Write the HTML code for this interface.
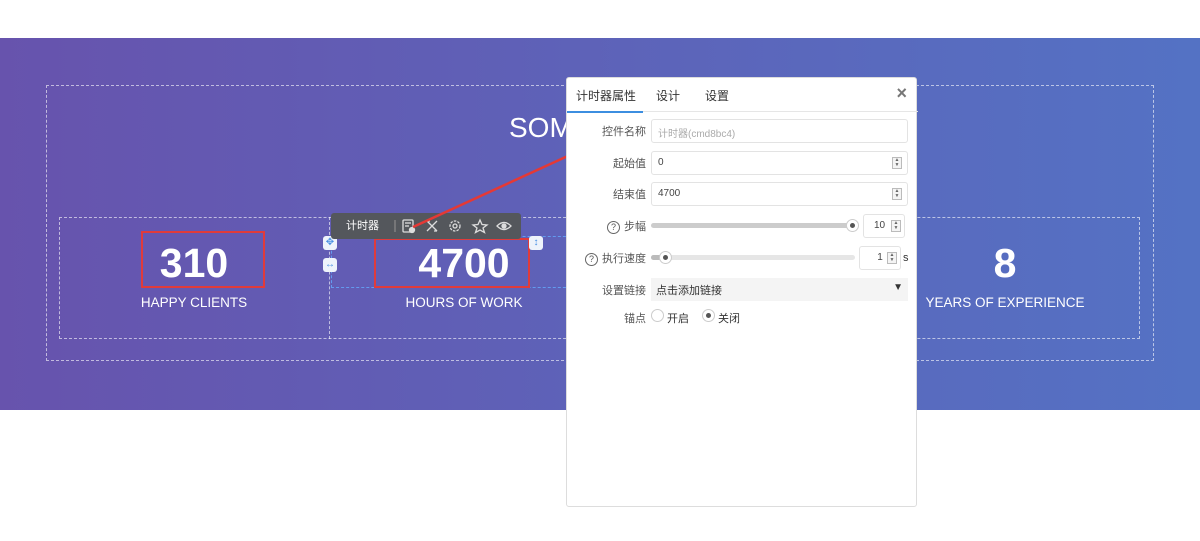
<!DOCTYPE html>
<html><head><meta charset="utf-8"><style>
*{box-sizing:border-box;margin:0;padding:0}
body{width:1200px;height:541px;background:#fff;position:relative;overflow:hidden;font-family:"Liberation Sans","Noto Sans CJK SC",sans-serif}
.band{position:absolute;left:0;top:38px;width:1200px;height:372px;background:linear-gradient(90deg,#6753ad,#5472c4)}
.dash{position:absolute;border:1px dashed rgba(255,255,255,.6)}
.num{position:absolute;color:#fff;font-weight:bold;font-size:41px;text-align:center}
.lab{position:absolute;color:#fff;font-size:13.5px;text-align:center}
.red{position:absolute;border:2px solid #e03b3b}
.panel{position:absolute;left:566px;top:77px;width:351px;height:430px;background:#fff;border:1px solid #ddd;border-radius:3px;font-size:11px;color:#333}
.row{position:absolute;left:0;width:351px;height:24px}
.row .l{position:absolute;right:272px;top:4px;color:#555;white-space:nowrap}
.inp{position:absolute;left:84px;height:24px;border:1px solid #e3e3e3;border-radius:3px;padding:5px 6px;color:#444;font-size:10px}
.spin{position:absolute;right:5px;top:5px;width:10px;height:12px;border:1px solid #bbb;background:#f4f4f4;font-size:5px;line-height:5px;text-align:center;color:#666}
.q{display:inline-block;width:13px;height:13px;border:1px solid #666;border-radius:50%;font-size:9px;text-align:center;line-height:11px;margin-right:4px}
.btn{position:absolute;width:14px;height:14px;background:#eef3fb;border-radius:3px;color:#4a90e2;font-size:10px;text-align:center;line-height:14px}
</style></head><body>
<div class="band"></div>
<div class="dash" style="left:46px;top:85px;width:1108px;height:276px"></div>
<div class="dash" style="left:59px;top:217px;width:1081px;height:122px"></div>
<div class="dash" style="left:329px;top:217px;width:0;height:122px;border-width:0 0 0 1px"></div>
<div class="dash" style="left:331px;top:236px;width:250px;height:52px;border-color:rgba(100,170,255,.8)"></div>
<div style="position:absolute;left:509px;top:112px;color:#fff;font-size:28px">SOM</div>
<div class="num" style="left:134px;top:240px;width:120px">310</div>
<div class="lab" style="left:114px;top:295px;width:160px">HAPPY CLIENTS</div>
<div class="red" style="left:141px;top:231px;width:124px;height:57px"></div>
<div class="num" style="left:404px;top:240px;width:120px">4700</div>
<div class="lab" style="left:384px;top:295px;width:160px">HOURS OF WORK</div>
<div class="red" style="left:374px;top:238px;width:156px;height:50px"></div>
<div class="num" style="left:945px;top:240px;width:120px">8</div>
<div class="lab" style="left:905px;top:295px;width:200px">YEARS OF EXPERIENCE</div>
<div class="btn" style="left:323px;top:236px">✥</div>
<div class="btn" style="left:323px;top:258px">↔</div>
<div class="btn" style="left:529px;top:236px">↕</div>
<div style="position:absolute;left:331px;top:213px;width:190px;height:26px;background:#54575c;border-radius:3px;color:#fff;font-size:11px;line-height:26px;padding-left:15px">计时器</div>
<svg style="position:absolute;left:331px;top:213px" width="190" height="26" fill="none" stroke="#ddd" stroke-width="1.3">
<line x1="64" y1="7" x2="64" y2="19" stroke="#888"/>
<rect x="72" y="7" width="10" height="12" rx="1"/><line x1="74" y1="10" x2="80" y2="10"/><line x1="74" y1="13" x2="78" y2="13"/><circle cx="81" cy="17" r="2.5" fill="#ddd"/>
<path d="M96 8 L106 18 M106 8 L96 18 M96 8 l3 0 M103 18 l3 0"/>
<circle cx="124" cy="13" r="2"/><circle cx="124" cy="13" r="5" stroke-dasharray="2.5 1.2"/>
<path d="M149 7 L151 11.5 L156 12 L152 15 L153.5 19.5 L149 17 L144.5 19.5 L146 15 L142 12 L147 11.5 Z"/>
<path d="M166 13 Q173 6 180 13 Q173 20 166 13 Z"/><circle cx="173" cy="13" r="2" fill="#ddd"/>
</svg>
<svg style="position:absolute;left:0;top:0" width="1200" height="541"><line x1="413" y1="227" x2="570" y2="155" stroke="#e53935" stroke-width="2.5"/><polygon points="580,150 566,149 571,161" fill="#e53935"/></svg>
<div class="panel">
<div style="position:absolute;left:0;top:0;width:351px;height:34px;border-bottom:1px solid #e6e6e6"></div>
<div style="position:absolute;left:9px;top:9px;font-size:12px">计时器属性</div>
<div style="position:absolute;left:89px;top:9px;font-size:12px">设计</div>
<div style="position:absolute;left:138px;top:9px;font-size:12px">设置</div>
<div style="position:absolute;left:0;top:33px;width:76px;height:2px;background:#3c8ee0"></div>
<div style="position:absolute;right:9px;top:5px;font-size:18px;color:#777;font-weight:bold">×</div>
<div class="row" style="top:41px"><span class="l">控件名称</span><div class="inp" style="width:257px;color:#aaa">计时器(cmd8bc4)</div></div>
<div class="row" style="top:73px"><span class="l">起始值</span><div class="inp" style="width:257px">0<div class="spin">▲<br>▼</div></div></div>
<div class="row" style="top:104px"><span class="l">结束值</span><div class="inp" style="width:257px">4700<div class="spin">▲<br>▼</div></div></div>
<div class="row" style="top:136px"><span class="l"><span class="q">?</span>步幅</span>
<div style="position:absolute;left:84px;top:9px;width:202px;height:5px;background:#ccc;border-radius:3px"></div>
<div style="position:absolute;left:279px;top:5px;width:13px;height:13px;border:1px solid #ccc;border-radius:50%;background:#fff"><div style="margin:3px;width:5px;height:5px;background:#555;border-radius:50%"></div></div>
<div class="inp" style="left:296px;width:42px;text-align:left;padding-left:10px">10<div class="spin" style="right:3px">▲<br>▼</div></div></div>
<div class="row" style="top:168px"><span class="l"><span class="q">?</span>执行速度</span>
<div style="position:absolute;left:84px;top:9px;width:204px;height:5px;background:#e6e6e6;border-radius:3px"></div>
<div style="position:absolute;left:84px;top:9px;width:12px;height:5px;background:#bbb;border-radius:3px"></div>
<div style="position:absolute;left:92px;top:5px;width:13px;height:13px;border:1px solid #ccc;border-radius:50%;background:#fff"><div style="margin:3px;width:5px;height:5px;background:#555;border-radius:50%"></div></div>
<div class="inp" style="left:292px;width:42px;text-align:center">1<div class="spin" style="right:3px">▲<br>▼</div></div><span style="position:absolute;left:336px;top:6px">s</span></div>
<div class="row" style="top:200px"><span class="l">设置链接</span><div style="position:absolute;left:84px;width:257px;height:23px;background:#f4f4f4;padding:4px 5px;font-size:11px;color:#333">点击添加链接<span style="float:right;font-size:10px">▼</span></div></div>
<div class="row" style="top:228px"><span class="l">锚点</span>
<span style="position:absolute;left:84px;top:3px;width:13px;height:13px;border:1px solid #ccc;border-radius:50%"></span><span style="position:absolute;left:100px;top:4px">开启</span>
<span style="position:absolute;left:135px;top:3px;width:13px;height:13px;border:1px solid #ccc;border-radius:50%"><span style="display:block;margin:3px;width:5px;height:5px;background:#555;border-radius:50%"></span></span><span style="position:absolute;left:151px;top:4px">关闭</span></div>
</div>
</body></html>
